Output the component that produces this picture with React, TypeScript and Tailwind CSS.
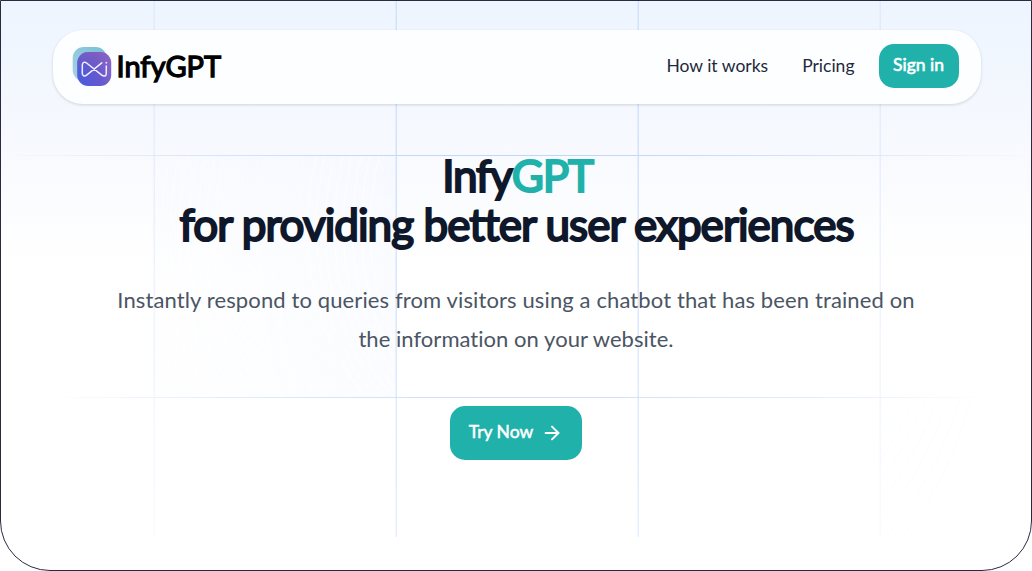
import { ArrowRight } from "lucide-react";

const verticals = [154, 396, 638, 880];
const horizontals = [155, 397];
const arcs = [0, 1, 2, 3, 4, 5, 6, 7];

function Backdrop() {
  return (
    <svg className="pointer-events-none absolute inset-0 h-full w-full" viewBox="0 0 1030 569" aria-hidden="true">
      <defs>
        <radialGradient id="fade" gradientUnits="userSpaceOnUse" cx="516" cy="0" r="525" gradientTransform="matrix(1 0 0 1.7 0 0)">
          <stop offset="0" stopColor="#fff" />
          <stop offset="0.3" stopColor="#fff" stopOpacity="0.9" />
          <stop offset="0.72" stopColor="#fff" stopOpacity="0.42" />
          <stop offset="1" stopColor="#fff" stopOpacity="0" />
        </radialGradient>
        <mask id="grid-mask" maskUnits="userSpaceOnUse" x="0" y="0" width="1030" height="569">
          <rect width="1030" height="569" fill="url(#fade)" />
        </mask>
        <clipPath id="left-cell">
          <rect x="154" y="155" width="241" height="241" />
        </clipPath>
        <clipPath id="right-cell">
          <rect x="880" y="397" width="100" height="140" />
        </clipPath>
        <linearGradient id="cell" x1="0" y1="0" x2="1" y2="0">
          <stop stopColor="#f8faff" stopOpacity="0.4" />
          <stop offset="1" stopColor="#f5f8ff" stopOpacity="0.65" />
        </linearGradient>
      </defs>
      <g mask="url(#grid-mask)">
        <rect x="154" y="155" width="241" height="241" fill="url(#cell)" />
        <g clipPath="url(#left-cell)" fill="none" stroke="#fff" strokeWidth="1.5" opacity="0.5">
          {arcs.map((i) => (
            <path key={i} d={`M${160 + i * 9} 155C${140 + i * 9} 240 ${155 + i * 9} 330 ${200 + i * 9} 397M${315 + i * 9} 155C${295 + i * 9} 240 ${310 + i * 9} 330 ${365 + i * 9} 397`} />
          ))}
        </g>
        {verticals.map((x) => (
          <rect key={x} x={x - 1.5} y="0" width="1.5" height="536" fill="#cfe0fd" />
        ))}
        {horizontals.map((y) => (
          <rect key={y} x="0" y={y - 1} width="1030" height="1" fill="#bcd5f9" />
        ))}
      </g>
      <g clipPath="url(#right-cell)" fill="none" stroke="#fcfdff" strokeWidth="1">
        {arcs.map((i) => (
          <path key={i} d={`M${892 + i * 11.2} 397Q${860 + i * 12} ${450 + i * 6} ${815 + i * 10} ${500 + i * 8}`} />
        ))}
      </g>
    </svg>
  );
}

function Logo() {
  return (
    <svg className="h-10 w-10 shrink-0" viewBox="0 0 40 40" aria-hidden="true">
      <defs>
        <linearGradient id="back" x1="0" y1="1" x2="1" y2="0">
          <stop stopColor="#a9d2e4" />
          <stop offset="1" stopColor="#78bfd6" />
        </linearGradient>
        <linearGradient id="front" x1="0.1" y1="0.8" x2="1" y2="0.5">
          <stop stopColor="#4f5cd9" />
          <stop offset="0.6" stopColor="#6659cd" />
          <stop offset="1" stopColor="#8464cb" />
        </linearGradient>
        <linearGradient id="sheen" x1="0" y1="0" x2="0" y2="1">
          <stop stopColor="#8a5fb8" stopOpacity="0.6" />
          <stop offset="0.5" stopColor="#8a5fb8" stopOpacity="0" />
        </linearGradient>
      </defs>
      <rect x="0.7" y="0.1" width="34" height="34" rx="11" fill="url(#back)" />
      <rect x="5.2" y="5" width="34" height="34" rx="11" fill="url(#front)" />
      <rect x="5.2" y="5" width="34" height="34" rx="11" fill="url(#sheen)" />
      <path
        d="M34.3 19V26.4C34.3 29.3 31.8 29.8 29.8 28.2L14.6 16C12.6 14.4 10.3 15.4 10.3 18V26.2C10.3 28.9 12.6 29.8 14.6 28.2L29.8 15.8"
        fill="none"
        stroke="#f1edff"
        strokeWidth="1.5"
        strokeLinecap="round"
        strokeLinejoin="round"
      />
      <circle cx="34.3" cy="15.7" r="0.95" fill="#e6dcf8" />
    </svg>
  );
}

export default function App() {
  return (
    <div className="h-[571px] w-full bg-white font-['Lato','Open_Sans',sans-serif] [font-variant-ligatures:none]">
      <main className="relative h-full w-full overflow-hidden rounded-b-[50px] border border-[#2b2940] bg-linear-to-b from-[#edf5ff] via-[#f5f8fe] via-[20%] to-white to-[46%]">
        <Backdrop />
        <div className="relative flex flex-col items-center">
          <header className="mt-[29px] ml-px flex h-[74px] w-[928px] items-center justify-between rounded-[30px] bg-[#fdfeff] pr-[22px] pl-[19px] shadow-[0_1px_3px_rgba(15,23,42,0.16)]">
            <a className="flex items-center" href="#">
              <Logo />
              <span className="ml-[5px] pb-0.5 text-[29px] leading-10 font-normal whitespace-nowrap text-black [-webkit-text-stroke:1.3px_currentColor]">InfyGPT</span>
            </a>
            <nav className="flex items-center pb-0.5 text-[17.5px] text-[#1e293b]">
              <a className="whitespace-nowrap" href="#">How it works</a>
              <a className="ml-[34px] whitespace-nowrap" href="#">Pricing</a>
              <a className="ml-6 flex h-[44px] w-20 items-center justify-center rounded-[15px] bg-[#20b2aa] pb-px whitespace-nowrap text-white [-webkit-text-stroke:0.6px_currentColor]" href="#">Sign in</a>
            </nav>
          </header>
          <h1 className="mt-[47px] ml-px text-center text-[44px] leading-[49px] font-normal whitespace-nowrap text-[#0f172a] [-webkit-text-stroke:2.1px_currentColor]">
            <span className="block pl-0.5 tracking-[-1.2px]">Infy<span className="text-[#20b2aa]">GPT</span></span>
            <span className="block tracking-[-0.95px]">for providing better user experiences</span>
          </h1>
          <p className="mt-[31px] text-center text-[22px] leading-[39px] whitespace-nowrap text-[#4b5563]">
            <span className="block tracking-[0.12px]">Instantly respond to queries from visitors using a chatbot that has been trained on</span>
            <span className="block tracking-[0.04px]">the information on your website.</span>
          </p>
          <a className="mt-[48px] flex h-[54px] w-[132px] items-center justify-center rounded-[15px] bg-[#20b2aa] text-[17.5px] whitespace-nowrap text-white" href="#">
            <span className="pb-px [-webkit-text-stroke:0.5px_currentColor]">Try Now</span>
            <ArrowRight className="ml-2 h-[22px] w-[22px]" strokeWidth={2.1} />
          </a>
        </div>
      </main>
    </div>
  );
}
